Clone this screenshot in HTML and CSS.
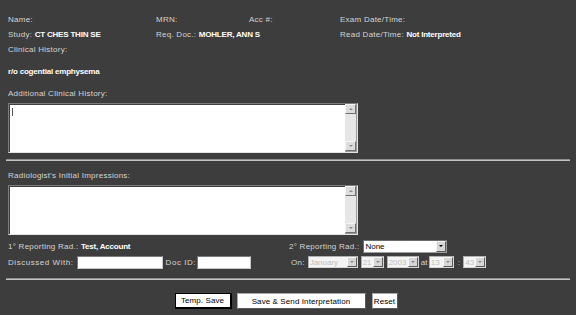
FILE: index.html
```html
<!DOCTYPE html>
<html>
<head>
<meta charset="utf-8">
<link rel="stylesheet" href="styles.css">
</head>
<body>
<div class="page">
  <div class="info">
    <div>Name:</div>
    <div>MRN:</div>
    <div>Acc #:</div>
    <div>Exam Date/Time:</div>
    <div>Study: <b>CT CHES THIN SE</b></div>
    <div class="span2">Req. Doc.: <b>MOHLER, ANN S</b></div>
    <div>Read Date/Time: <b>Not Interpreted</b></div>
    <div class="full">Clinical History:</div>
  </div>
  <div class="history"><b>r/o cogential emphysema</b></div>
  <div class="label">Additional Clinical History:</div>
  <div class="ta">
    <div class="ta-field"><span class="caret"></span><textarea class="ta-input"></textarea></div>
    <div class="sb"><span class="sbtn up"></span><span class="sbtn down"></span></div>
  </div>
  <div class="rule rule1"></div>
  <div class="label">Radiologist's Initial Impressions:</div>
  <div class="ta">
    <div class="ta-field"><textarea class="ta-input"></textarea></div>
    <div class="sb"><span class="sbtn up"></span><span class="sbtn down"></span></div>
  </div>
  <div class="report">
    <div class="rrow"><span>1° Reporting Rad.:&nbsp;</span><b>Test, Account</b></div>
    <div class="rrow"><span>2° Reporting Rad.:</span><span class="sel sel-none"><select class="sel-input"><option>None</option></select><span class="arrow"></span></span></div>
    <div class="rrow"><span class="wide">Discussed With:</span><input class="txt txt-with" type="text"><span class="wide">Doc ID:</span><input class="txt txt-doc" type="text"></div>
    <div class="rrow on"><span>On:</span><span class="sel dis w-month"><select class="sel-input" disabled><option>January</option></select><span class="arrow"></span></span><span class="sel dis w-day"><select class="sel-input" disabled><option>21</option></select><span class="arrow"></span></span><span class="sel dis w-year"><select class="sel-input" disabled><option>2003</option></select><span class="arrow"></span></span><span class="at">at</span><span class="sel dis w-hour"><select class="sel-input" disabled><option>13</option></select><span class="arrow"></span></span><span class="colon">:</span><span class="sel dis w-min"><select class="sel-input" disabled><option>43</option></select><span class="arrow"></span></span></div>
  </div>
  <div class="rule rule2"></div>
  <div class="buttons">
    <button class="btn btn-temp">Temp. Save</button>
    <button class="btn btn-send">Save &amp; Send Interpretation</button>
    <button class="btn btn-reset">Reset</button>
  </div>
</div>
</body>
</html>
```

FILE: styles.css
```css
html, body {
  margin: 0;
  padding: 0;
  background: #3d3d3d;
}
body {
  width: 576px;
  height: 315px;
  overflow: hidden;
  font-family: "Liberation Sans", Arial, sans-serif;
  font-size: 8px;
  letter-spacing: 0.25px;
  color: #d4d4d4;
}
b {
  color: #ffffff;
  font-weight: bold;
  letter-spacing: -0.2px;
}
.page {
  padding: 12px 6px 0 8px;
}
.info {
  display: grid;
  grid-template-columns: 148px 93px 91px auto;
  grid-auto-rows: 15px;
  line-height: 15px;
}
.span2 { grid-column: span 2; }
.full { grid-column: 1 / -1; }
.history {
  margin-top: 7px;
  line-height: 15px;
}
.label {
  margin-top: 7px;
  line-height: 15px;
}
.ta {
  display: flex;
  width: 350px;
  height: 50px;
  margin-top: 2px;
  box-sizing: border-box;
  border-top: 1px solid #7c7c7c;
  border-left: 1px solid #7c7c7c;
  border-right: 1px solid #e4e4e4;
  border-bottom: 1px solid #e4e4e4;
  background: #ffffff;
}
.ta-field {
  flex: 1;
  display: flex;
  border-top: 1px solid #404040;
  border-left: 1px solid #404040;
  background: #ffffff;
}
.caret {
  width: 1px;
  height: 8px;
  margin: 3px 0 0 2px;
  background: #555;
}
.ta-input {
  flex: 1;
  border: none;
  resize: none;
  outline: none;
  background: transparent;
  padding: 0;
  margin: 0;
}
.sb {
  width: 11px;
  display: flex;
  flex-direction: column;
  justify-content: space-between;
  background: #e6e6e6;
  border-right: 1px solid #9a9a9a;
  border-bottom: 1px solid #9a9a9a;
}
.sbtn {
  display: flex;
  align-items: center;
  justify-content: center;
  height: 10px;
  box-sizing: border-box;
  background: #dcdcdc;
  border-top: 1px solid #f4f4f4;
  border-left: 1px solid #f4f4f4;
  border-right: 1px solid #707070;
  border-bottom: 1px solid #707070;
}
.sbtn::before {
  content: "";
  width: 0;
  height: 0;
  border-left: 2px solid transparent;
  border-right: 2px solid transparent;
}
.up::before { border-bottom: 2px solid #888; }
.down::before { border-top: 2px solid #888; }
.rule {
  height: 2px;
  margin-left: -2px;
  box-sizing: border-box;
  border-top: 1px solid #8e8e8e;
  border-bottom: 1px solid #c4c4c4;
}
.rule1 { margin-top: 6px; }
.rule2 { margin-top: 8px; }
.report {
  display: grid;
  grid-template-columns: 281px auto;
  grid-auto-rows: 16px;
  margin-top: 3px;
}
.rrow {
  display: flex;
  align-items: center;
  white-space: nowrap;
}
.wide { letter-spacing: 0.55px; }
.sel {
  display: inline-flex;
  align-items: stretch;
  height: 12px;
  box-sizing: border-box;
  background: #ffffff;
  border: 1px solid #9c9c9c;
  border-top-color: #6c6c6c;
  border-left-color: #6c6c6c;
  letter-spacing: 0;
}
.sel-none {
  width: 84px;
  height: 13px;
  margin-left: 4px;
}
.sel-input {
  appearance: none;
  -webkit-appearance: none;
  flex: 1;
  min-width: 0;
  border: none;
  outline: none;
  background: transparent;
  font-family: "Liberation Sans", Arial, sans-serif;
  font-size: 8px;
  color: #000;
  padding: 0 1px;
  margin: 0;
}
.arrow {
  width: 10px;
  display: flex;
  align-items: center;
  justify-content: center;
  box-sizing: border-box;
  background: #d6d6d6;
  border-top: 1px solid #f6f6f6;
  border-left: 1px solid #f6f6f6;
  border-right: 1px solid #5a5a5a;
  border-bottom: 1px solid #5a5a5a;
}
.arrow::before {
  content: "";
  border-left: 2px solid transparent;
  border-right: 2px solid transparent;
  border-top: 2px solid #000;
}
.dis {
  background: #f4f4f4;
  border-color: #d8d8d8;
  border-top-color: #b0b0b0;
  border-left-color: #b0b0b0;
}
.dis .sel-input { color: #a8a8a8; }
.dis .arrow::before { border-top-color: #8a8a8a; }
.on { padding-left: 2px; }
.on .sel { margin-left: 3px; }
.on .w-month { margin-left: 3px; width: 50px; }
.w-day { width: 23px; }
.w-year { width: 32px; }
.on .w-hour { width: 25px; margin-left: 1px; }
.w-min { width: 23px; }
.at { margin-left: 2px; }
.colon { margin-left: 4px; }
.txt {
  height: 13px;
  box-sizing: border-box;
  border: 1px solid #c8c8c8;
  border-top-color: #7a7a7a;
  border-left-color: #7a7a7a;
  background: #fff;
  padding: 0;
  outline: none;
}
.txt-with {
  width: 86px;
  margin: 0 3px 0 3px;
}
.txt-doc {
  width: 54px;
  margin-left: 1px;
}
.buttons {
  display: flex;
  justify-content: center;
  gap: 5px;
  margin-top: 13px;
  padding-right: 6px;
}
.btn {
  height: 16px;
  box-sizing: border-box;
  background: #ffffff;
  font-family: "Liberation Sans", Arial, sans-serif;
  font-size: 8px;
  letter-spacing: 0.1px;
  color: #000;
  padding: 0;
  border: 1px solid #a8a8a8;
  border-right-color: #5a5a5a;
  border-bottom-color: #5a5a5a;
  border-radius: 0;
}
.btn-temp {
  width: 57px;
  border: 1px solid #000;
  border-right-width: 2px;
  border-bottom-width: 2px;
}
.btn-send { width: 129px; }
.btn-reset { width: 26px; margin-left: 1px; }
```
